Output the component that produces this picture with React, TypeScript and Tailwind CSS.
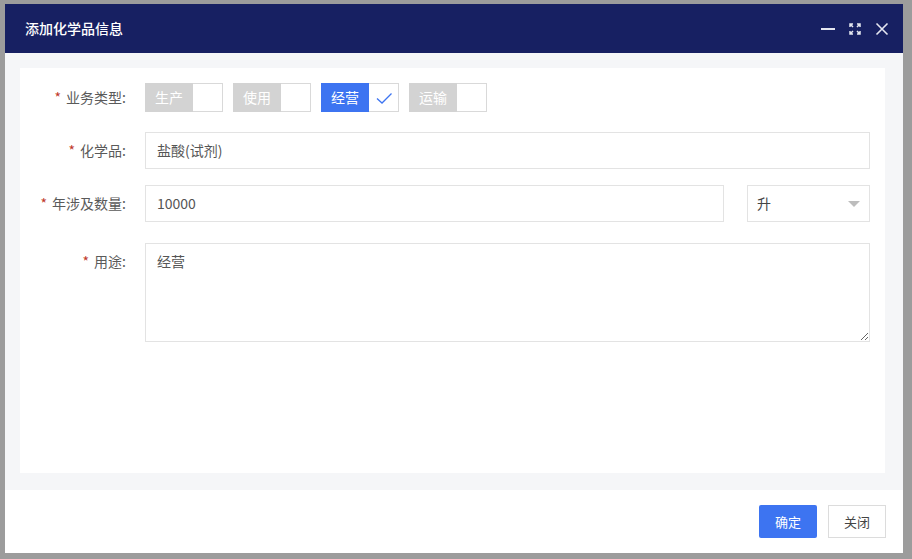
import React from "react";

const font = { fontFamily: '"Noto Sans CJK SC", "Noto Sans", sans-serif' };

function Check({ label, checked }: { label: string; checked?: boolean }) {
  return (
    <div className="flex h-[29px]">
      <div
        className={
          "w-[48px] h-full flex items-center justify-center text-[14px] text-white " +
          (checked ? "bg-[#3d74f1]" : "bg-[#d3d3d3]")
        }
      >
        {label}
      </div>
      <div className="w-[30px] h-full bg-white border border-[#d9d9d9] border-l-0 flex items-center justify-center">
        {checked && (
          <svg width="18" height="14" viewBox="0 0 18 14">
            <path d="M2 7.5 L7 12 L16.5 2.5" fill="none" stroke="#3d74f1" strokeWidth="1.3" />
          </svg>
        )}
      </div>
    </div>
  );
}

function Label({ text, className = "" }: { text: string; className?: string }) {
  return (
    <div className={"w-[106px] shrink-0 text-right text-[14px] text-[#5a5a5a] whitespace-nowrap " + className}>
      <span className="text-[#c0392b] mr-[5px]">*</span>
      {text}:
    </div>
  );
}

export default function App() {
  return (
    <div style={font} className="w-[912px] h-[559px] bg-[#9c9c9c] pt-[4px] pl-[5px] pr-[9px] pb-[6px]">
      <div className="h-full flex flex-col bg-white">
        <div className="h-[49px] shrink-0 bg-[#172062] flex items-center justify-between pl-[20px] pr-[13px]">
          <div className="text-white text-[14px] font-medium">添加化学品信息</div>
          <div className="flex items-center gap-[12px]">
            <svg width="16" height="16" viewBox="0 0 16 16">
              <path d="M1 8 H15" stroke="#e4e6f0" strokeWidth="2" />
            </svg>
            <svg width="14" height="14" viewBox="0 0 14 14" fill="none" stroke="#e4e6f0" strokeWidth="1.5">
              <path d="M2 5 V2 H5 M2 2 L5 5" />
              <path d="M9 2 H12 V5 M12 2 L9 5" />
              <path d="M2 9 V12 H5 M2 12 L5 9" />
              <path d="M12 9 V12 H9 M12 12 L9 9" />
            </svg>
            <svg width="16" height="16" viewBox="0 0 16 16">
              <path d="M2.5 2.5 L13.5 13.5 M13.5 2.5 L2.5 13.5" stroke="#e4e6f0" strokeWidth="1.6" />
            </svg>
          </div>
        </div>
        <div className="flex-1 bg-[#f5f6f8] pt-[15px] pl-[15px] pr-[18px] pb-[17px] flex">
          <div className="flex-1 bg-white pt-[15px] pr-[15px] flex flex-col">
            <div className="flex items-center h-[29px]">
              <Label text="业务类型" />
              <div className="ml-[19px] flex gap-[10px]">
                <Check label="生产" />
                <Check label="使用" />
                <Check label="经营" checked />
                <Check label="运输" />
              </div>
            </div>
            <div className="flex items-center mt-[20px]">
              <Label text="化学品" />
              <div className="ml-[19px] flex-1 h-[37px] border border-[#e3e3e3] flex items-center pl-[11px] text-[14px] text-[#555]">
                盐酸(试剂)
              </div>
            </div>
            <div className="flex items-center mt-[16px]">
              <Label text="年涉及数量" />
              <div className="ml-[19px] flex-1 h-[37px] border border-[#e3e3e3] flex items-center pl-[11px] text-[14px] text-[#555]">
                10000
              </div>
              <div className="ml-[23px] w-[123px] h-[37px] border border-[#e3e3e3] flex items-center justify-between pl-[9px] pr-[9px] text-[14px] text-[#444]">
                <span>升</span>
                <svg width="12" height="8" viewBox="0 0 12 8">
                  <path d="M0 1 H12 L6 7 Z" fill="#bdbdbd" />
                </svg>
              </div>
            </div>
            <div className="flex items-start mt-[21px]">
              <Label text="用途" className="mt-[8px]" />
              <textarea
                readOnly
                defaultValue="经营"
                style={font}
                className="ml-[19px] flex-1 h-[99px] border border-[#e3e3e3] pl-[11px] pt-[7px] text-[14px] text-[#555] outline-none"
              />
            </div>
          </div>
        </div>
        <div className="h-[63px] shrink-0 flex items-center justify-end gap-[11px] pr-[17px]">
          <div className="w-[58px] h-[33px] bg-[#3d74f1] text-white text-[13px] flex items-center justify-center rounded-[2px]">
            确定
          </div>
          <div className="w-[58px] h-[33px] bg-white border border-[#dcdcdc] text-[#444] text-[13px] flex items-center justify-center">
            关闭
          </div>
        </div>
      </div>
    </div>
  );
}
